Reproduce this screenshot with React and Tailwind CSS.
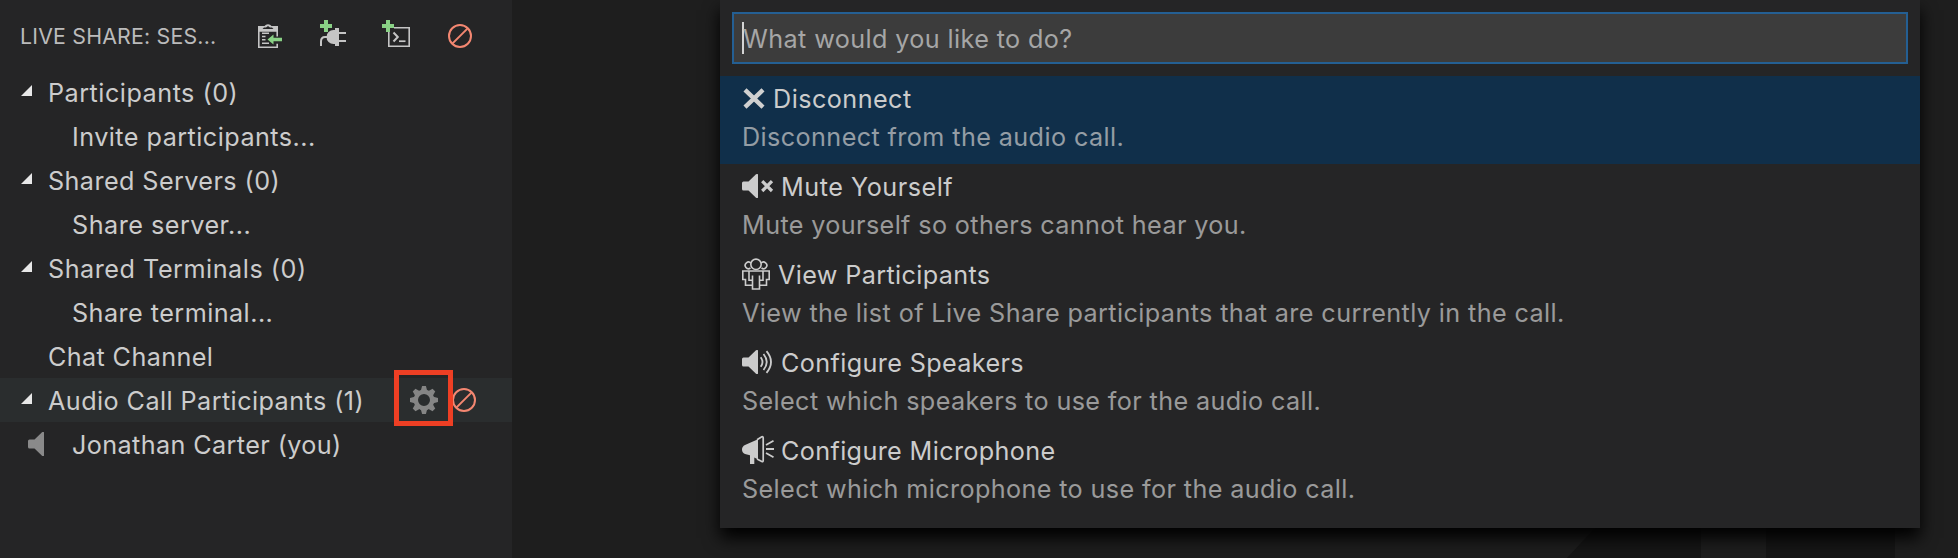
const CancelIcon = ({ className = '' }) => (
  <svg viewBox="0 0 24 24" className={`size-6 shrink-0 ${className}`} fill="none" stroke="#f48771" strokeWidth="2">
    <circle cx="12" cy="12" r="11" />
    <path d="M4.6 19.4 19.4 4.6" />
  </svg>
);

const ClipboardIcon = () => (
  <svg viewBox="0 0 24 24" className="size-6 shrink-0" fill="none">
    <path d="M19.2 12.5V7H.8v16.2h18.4v-3.5" stroke="#c5c5c5" strokeWidth="1.6" />
    <path d="M0 2h6.5L8 .8C9 0 11 0 12 .8L13.500 2H20v5H0z" fill="#c5c5c5" />
    <path d="M4.500 5 6 3.500h2L10 2l2 1.500h2L15.500 5z" fill="#252526" />
    <path d="M4 9.200h7M4 12.500h3.500M4 15.800h3.500M4 19.300h7" stroke="#c5c5c5" strokeWidth="1.500" />
    <path d="M9.500 15.500 15.500 10.500v3.200H24v3.600h-8.500v3.200z" fill="#89d185" />
  </svg>
);

const PlugIcon = () => (
  <svg viewBox="0 0 26 26" className="size-[26px] shrink-0" fill="none">
    <path d="M4 0h4v4h4v4H8v4H4V8H0V4h4z" fill="#89d185" />
    <path d="M15 10v14h-1.500a7 7 0 0 1 0-14z" fill="#c5c5c5" />
    <path d="M15 8h4v4h7v2h-7v6h7v2h-7v4h-4z" fill="#c5c5c5" />
    <path d="M8 17H5q-4 0-4 4.500V26" stroke="#c5c5c5" strokeWidth="2" />
  </svg>
);

const TerminalIcon = () => (
  <svg viewBox="0 0 28 28" className="size-7 shrink-0" fill="none">
    <path d="M12 7.800h15.200v18.400H6.800V12" stroke="#c5c5c5" strokeWidth="1.600" />
    <path d="m11.500 12.500 4.300 4.500-4.300 4.500" stroke="#c5c5c5" strokeWidth="2" />
    <path d="M17 21.200h6.500" stroke="#c5c5c5" strokeWidth="1.700" />
    <path d="M4 0h4v4h4v4H8v4H4V8H0V4h4z" fill="#89d185" />
  </svg>
);

const GearIcon = () => (
  <svg viewBox="-14 -14 28 28" className="size-7 shrink-0">
    <g fill="#858585">
      {[0, 45, 90, 135, 180, 225, 270, 315].map((angle) => (
        <path key={angle} d="M-3.400-8.500-1.900-14h3.800L3.400-8.500z" transform={`rotate(${angle})`} />
      ))}
    </g>
    <circle r="8.200" fill="none" stroke="#858585" strokeWidth="4.400" />
  </svg>
);

const Twistie = () => (
  <svg viewBox="0 0 11 11" className="mb-[3px] size-[11px] shrink-0" fill="#e8e8e8">
    <path d="M11 0v11H0z" />
  </svg>
);

const speakerPath = 'M1.500 17.500H6.500L14 10.300Q15 9.500 16 10.300V33.700Q15 34.500 14 33.700L6.500 26.500H1.500Q0 26.500 0 25V19Q0 17.500 1.500 17.500z';

const SpeakerIcon = () => (
  <svg viewBox="0 10 16 24" className="h-6 w-4 shrink-0" fill="#8a8a8a">
    <path d={speakerPath} />
  </svg>
);

const CloseIcon = () => (
  <svg viewBox="0 4 31 38" className="h-[38px] w-[31px] shrink-0">
    <path d="m3 13.800 18 17.400M21 13.800 3 31.200" stroke="#d0d0d0" strokeWidth="4.400" />
  </svg>
);

const MuteIcon = () => (
  <svg viewBox="0 4 39 38" className="h-[38px] w-[39px] shrink-0">
    <path d={speakerPath} fill="#cccccc" />
    <path d="m20.200 17.200 9.800 9.800M30 17.200 20.200 27" stroke="#cccccc" strokeWidth="3.200" />
  </svg>
);

const PeopleIcon = () => (
  <svg viewBox="0 4 36 38" className="h-[38px] w-9 shrink-0" fill="none" stroke="#cccccc" strokeWidth="1.600">
    <circle cx="14" cy="12.300" r="5.200" />
    <path d="M9 11.200A3.300 3.300 0 1 0 8.500 16M19 11.200A3.300 3.300 0 1 1 19.500 16" />
    <path d="M10.500 33.200H3.500V27.500H.8V19H27.200V27.500H24.500V33.200H17.500" />
    <path d="M10.500 23.500V37H17.500V23.500M7 19V28.300H10.500M21 19V28.300H17.500" />
  </svg>
);

const VolumeIcon = () => (
  <svg viewBox="0 4 39 38" className="h-[38px] w-[39px] shrink-0" fill="none">
    <path d={speakerPath} fill="#cccccc" />
    <path d="M18.700 17.200Q22.300 22 18.700 26.800M21.500 14Q28 22 21.500 30M24.500 11.200Q33.500 22 24.500 32.800" stroke="#cccccc" strokeWidth="1.800" />
  </svg>
);

const MegaphoneIcon = () => (
  <svg viewBox="0 4 39 38" className="h-[38px] w-[39px] shrink-0" fill="none">
    <path d="M16 11.300V31.500L12.300 29.500V36H8V27.300L3 26Q0 24.500 0 21.500T3 17z" fill="#cccccc" />
    <path d="m15 11.700 4.800-3Q21.200 8.200 21.200 10V32.500Q21.200 34 19.800 33.500L15 31" stroke="#cccccc" strokeWidth="1.700" />
    <path d="m24 17 7.500-4.300M24 21h8M24 25l7.500 4.300" stroke="#cccccc" strokeWidth="1.800" />
  </svg>
);

const treeItems = [
  { label: 'Participants (0)', group: true, tracking: 'tracking-[0.5px]' },
  { label: 'Invite participants...', tracking: 'tracking-[0.46px]' },
  { label: 'Shared Servers (0)', group: true, tracking: 'tracking-[0.41px]' },
  { label: 'Share server...', tracking: 'tracking-[0.49px]' },
  { label: 'Shared Terminals (0)', group: true, tracking: 'tracking-[0.52px]' },
  { label: 'Share terminal...', tracking: 'tracking-[0.45px]' },
];

const commands = [
  { Icon: CloseIcon, label: 'Disconnect', detail: 'Disconnect from the audio call.', labelTracking: 'tracking-[0.45px]', detailTracking: 'tracking-[0.4px]', selected: true },
  { Icon: MuteIcon, label: 'Mute Yourself', detail: 'Mute yourself so others cannot hear you.', labelTracking: 'tracking-[0.52px]', detailTracking: 'tracking-[0.373px]' },
  { Icon: PeopleIcon, label: 'View Participants', detail: 'View the list of Live Share participants that are currently in the call.', labelTracking: 'tracking-[0.36px]', detailTracking: 'tracking-[0.395px]' },
  { Icon: VolumeIcon, label: 'Configure Speakers', detail: 'Select which speakers to use for the audio call.', labelTracking: 'tracking-[0.37px]', detailTracking: 'tracking-[0.373px]' },
  { Icon: MegaphoneIcon, label: 'Configure Microphone', detail: 'Select which microphone to use for the audio call.', labelTracking: 'tracking-[0.36px]', detailTracking: 'tracking-[0.38px]' },
];

function Sidebar() {
  return (
    <aside className="w-[512px] shrink-0 bg-[#252526] leading-[46px]">
      <header className="flex h-[70px] items-start pl-5 text-[21.3px] leading-[73px] text-[#bbbbbb]">
        <h2 className="w-[238px] tracking-[0.21px]">LIVE SHARE: SES...</h2>
        <div className="flex pt-6"><ClipboardIcon /></div>
        <div className="flex pt-5 pl-[38px]"><PlugIcon /></div>
        <div className="flex pt-5 pl-9"><TerminalIcon /></div>
        <div className="flex pt-6 pl-[38px]"><CancelIcon /></div>
      </header>
      {treeItems.map(({ label, group, tracking }) => (
        <div key={label} className="flex h-11">
          <div className="flex w-12 items-center pl-[21px]">{group && <Twistie />}</div>
          <div className={`${group ? '' : 'pl-6'} ${tracking}`}>{label}</div>
        </div>
      ))}
      <div className="h-11 pl-12 tracking-[0.37px]">Chat Channel</div>
      <div className="relative flex h-11 bg-[#2a2d2e]">
        <div className="flex w-12 items-center pl-[21px]"><Twistie /></div>
        <div className="w-[362px] tracking-[0.43px]">Audio Call Participants (1)</div>
        <div className="flex items-center"><GearIcon /><CancelIcon className="ml-3.5" /></div>
        <div className="absolute -top-2 left-[394px] h-14 w-[59px] border-[5px] border-[#ee3f24]" />
      </div>
      <div className="flex h-11">
        <div className="flex w-[72px] items-center pl-7"><SpeakerIcon /></div>
        <div className="tracking-[0.39px]">Jonathan Carter (you)</div>
      </div>
    </aside>
  );
}

function QuickPick() {
  return (
    <section className="h-[528px] w-[1200px] bg-[#252526] pt-3 shadow-[0_10px_16px_#000]">
      <div className="mx-3 flex h-[52px] items-center border-2 border-[#245f93] bg-[#3c3c3c] pl-2">
        <div className="h-8 w-0.5 bg-[#d4d4d4]" />
        <div className="-ml-px pt-[3px] tracking-[0.39px] text-[#a6a6a6]">What would you like to do?</div>
      </div>
      <ul className="pt-3">
        {commands.map(({ Icon, label, detail, labelTracking, detailTracking, selected }) => (
          <li key={label} className={`h-[88px] pt-1 pl-[22px] leading-[38px] ${selected ? 'bg-[#102f4a]' : ''}`}>
            <div className="flex"><Icon /><span className={labelTracking}>{label}</span></div>
            <div className={`opacity-70 ${detailTracking}`}>{detail}</div>
          </li>
        ))}
      </ul>
    </section>
  );
}

export default function App() {
  return (
    <div className="flex h-[558px] w-[1958px] overflow-hidden bg-[#1e1e1e] font-['Inter',sans-serif] text-[25.2px] font-[370] whitespace-nowrap text-[#cccccc]">
      <Sidebar />
      <main className="relative flex-1 pl-[208px]">
        <svg viewBox="0 0 340 40" className="absolute right-[60px] bottom-0 h-10 w-[340px]" fill="#161616">
          <path d="M46 0H143V40H9zM208 0H337V40H208z" />
        </svg>
        <div className="relative"><QuickPick /></div>
      </main>
    </div>
  );
}
